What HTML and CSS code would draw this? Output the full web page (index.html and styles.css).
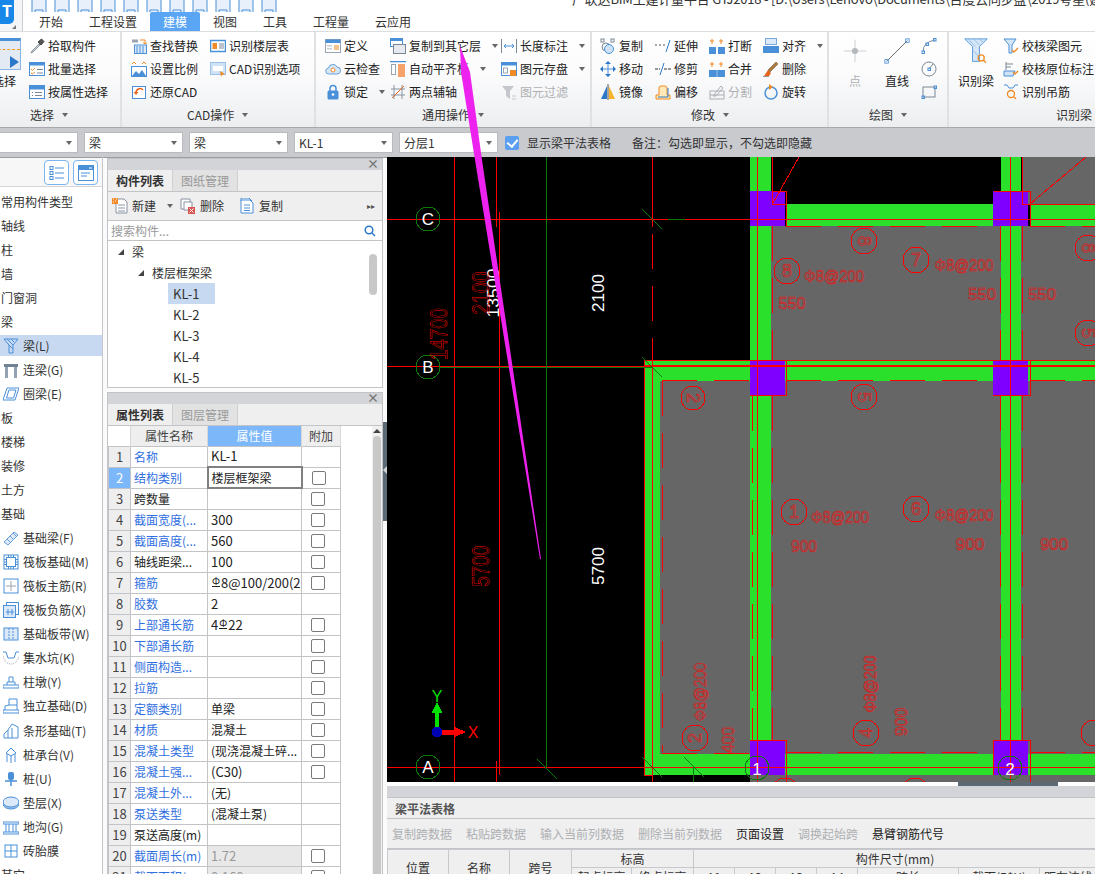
FILE: index.html
```html
<!DOCTYPE html>
<html lang="zh">
<head>
<meta charset="utf-8">
<title>GTJ2018</title>
<link rel="stylesheet" href="styles.css">
</head>
<body>
<svg class="defs" width="0" height="0">
<defs>
<symbol id="i-dropper" viewBox="0 0 16 16"><path d="M10 6 3 13l-1 2 2-1 7-7z" fill="#c9ced6" stroke="#8a94a3"/><path d="m9 4 3 3 3-3.500-2.500-2.500z" fill="#555" stroke="#444"/></symbol>
<symbol id="i-batch" viewBox="0 0 16 16"><rect x=".5" y="1.500" width="15" height="13" fill="#fff" stroke="#4a90d9"/><rect x=".5" y="1.500" width="15" height="3" fill="#4a90d9"/><path d="m2 8 1.500 1.500L6 7M2 12l1.500 1L6 11" stroke="#f08a24" fill="none"/><path d="M8 8.500h6M8 12h6" stroke="#7a8794"/></symbol>
<symbol id="i-attr" viewBox="0 0 16 16"><rect x=".5" y="1.500" width="15" height="13" fill="#fff" stroke="#4a90d9"/><rect x=".5" y="1.500" width="15" height="4" fill="#4a90d9"/><path d="M3 8.500h1M6 8.500h7M3 11.500h1M6 11.500h7" stroke="#7a8794"/></symbol>
<symbol id="i-find" viewBox="0 0 16 16"><path d="M1 1.500h6v3H1z" fill="#9aa5b1"/><path d="M9 2h5v4m-2-1.500L14 6l2-1.500" stroke="#f08a24" fill="none"/><rect x="3.500" y="7" width="12" height="8.500" fill="#dbe9f8" stroke="#4a90d9"/><path d="M6 8v7M9 8v7M12 8v7" stroke="#4a90d9"/></symbol>
<symbol id="i-scale" viewBox="0 0 16 16"><path d="m1 3 2-2 2 2M11 3l2-2 2 2" stroke="#f08a24" fill="none"/><rect x=".5" y="5.500" width="15" height="10" fill="#fff" stroke="#4a90d9"/><path d="m1 15 4-5 3 3 3-4 4 6z" fill="#4a90d9"/></symbol>
<symbol id="i-restore" viewBox="0 0 16 16"><rect x="1.500" y="2.500" width="13" height="12" fill="#fff" stroke="#4a90d9"/><path d="M5 9a4 4 0 0 1 7-3" stroke="#e8641b" stroke-width="1.500" fill="none"/><path d="m2.500 8 2.500 3 2.500-3z" fill="#e8641b"/></symbol>
<symbol id="i-floor" viewBox="0 0 16 16"><rect x=".5" y="2.500" width="15" height="11" fill="#fff" stroke="#4a90d9" stroke-width="1.500"/><rect x="2.500" y="5" width="4.500" height="6" fill="#f08a24"/><path d="M9 6h5M9 8h5M9 10h5" stroke="#7a8794"/></symbol>
<symbol id="i-cadopt" viewBox="0 0 16 16"><rect x=".5" y="1.500" width="15" height="12" fill="#cfe2f6" stroke="#9cc1e8"/><rect x="3" y="5" width="10" height="5" fill="#fff"/><path d="m10 10 5 3-3 1-1 2z" fill="#f08a24"/></symbol>
<symbol id="i-define" viewBox="0 0 16 16"><rect x=".5" y="1.500" width="15" height="13" fill="#fff" stroke="#9aa5b1"/><rect x=".5" y="1.500" width="15" height="3.500" fill="#4a90d9"/><rect x="2" y="7" width="5" height="1.500" fill="#c9ced6"/><rect x="2" y="10" width="5" height="1.500" fill="#c9ced6"/><rect x="9" y="7" width="5" height="5" fill="#f6c28b"/></symbol>
<symbol id="i-cloud" viewBox="0 0 16 16"><path d="M4 13a3 3 0 0 1-.5-6 4.500 4.500 0 0 1 8.500-1 3.500 3.500 0 0 1 0 7z" fill="#d5e6f7" stroke="#6a9fd8"/><circle cx="8" cy="9" r="2" fill="#fff" stroke="#f08a24"/></symbol>
<symbol id="i-lock" viewBox="0 0 16 16"><rect x="2.500" y="6.500" width="11" height="9" rx="1.500" fill="#4a90d9"/><path d="M5 7V4.500a3 3 0 0 1 6 0V7" stroke="#4a90d9" stroke-width="1.500" fill="none"/><circle cx="8" cy="10.500" r="1.300" fill="#fff"/></symbol>
<symbol id="i-copylayer" viewBox="0 0 16 16"><rect x=".5" y=".5" width="12" height="8" fill="#fff" stroke="#4a90d9"/><rect x=".5" y=".5" width="12" height="2.500" fill="#4a90d9"/><rect x="3.500" y="6.500" width="12" height="9" fill="#e6eaef" stroke="#7a8794"/></symbol>
<symbol id="i-align" viewBox="0 0 16 16"><path d="M0 .5h16" stroke="#4a90d9" stroke-width="1.500"/><rect x="1.500" y="3.500" width="4" height="10" fill="#fff" stroke="#9aa5b1"/><rect x="8" y="3" width="7" height="13" fill="#f6a26b"/></symbol>
<symbol id="i-twopt" viewBox="0 0 16 16" fill="none" stroke="#8a94a3"><path d="M4 1v14M12 1v14M1 5h14M1 11h14"/><path d="m2 14 12-12" stroke="#e8641b"/></symbol>
<symbol id="i-len" viewBox="0 0 16 16" fill="none" stroke="#4a90d9"><path d="M.5 1v14M15.500 1v14" stroke="#7a8794"/><path d="M3 8h10M5 6 3 8l2 2M11 6l2 2-2 2"/></symbol>
<symbol id="i-save" viewBox="0 0 16 16"><rect x=".5" y="1.500" width="15" height="13" fill="#fff" stroke="#4a90d9"/><rect x=".5" y="1.500" width="15" height="3" fill="#4a90d9"/><rect x="2.500" y="7" width="4" height="5" fill="#fff" stroke="#9aa5b1"/><rect x="9" y="9" width="6" height="6" fill="#f08a24"/></symbol>
<symbol id="i-filter" viewBox="0 0 16 16"><path d="M1 2h12L9 7v8L5 12V7z" fill="#c4c7cb"/><path d="M11 12h4M11 15h4" stroke="#c4c7cb"/></symbol>
<symbol id="i-copy" viewBox="0 0 16 16" fill="none"><rect x="1" y="1" width="3" height="3" stroke="#7a8794"/><rect x="11" y="1" width="3" height="3" stroke="#7a8794"/><circle cx="6" cy="9" r="4" stroke="#7a8794"/><circle cx="9" cy="11" r="4.500" fill="#cfe2f6" stroke="#4a90d9"/></symbol>
<symbol id="i-move" viewBox="0 0 16 16"><path d="M8 2v12M2 8h12" stroke="#4a90d9"/><path d="m8 0 3 3H5zM8 16l3-3H5zM0 8l3-3v6zM16 8l-3-3v6z" fill="#2b78c9"/></symbol>
<symbol id="i-mirror" viewBox="0 0 16 16"><path d="M7 2 1 15h6z" fill="#2b78c9"/><path d="M9 2l6 13H9z" fill="#f7b32b"/><path d="M8 0v16" stroke="#555"/></symbol>
<symbol id="i-extend" viewBox="0 0 16 16" fill="none"><path d="M0 7h2M4 7h2M8 7h2" stroke="#555" stroke-dasharray="2 1"/><path d="m15 2-4 12" stroke="#2b78c9"/></symbol>
<symbol id="i-trim" viewBox="0 0 16 16" fill="none"><path d="M0 8h5M9 8h7" stroke="#333" stroke-dasharray="3 1"/><path d="m9 2-4 12" stroke="#2b78c9"/></symbol>
<symbol id="i-offset" viewBox="0 0 16 16"><path d="M1 15v-4h3V4a2 2 0 0 1 2-2h4a2 2 0 0 1 2 2v7h3v4z" fill="#ffe9b8" stroke="#f08a24"/><path d="M3 13h10V4" fill="none" stroke="#2b78c9"/></symbol>
<symbol id="i-break" viewBox="0 0 16 16"><path d="M3 1v5M1 3h4M12 1v5M10 3h4" stroke="#f08a24"/><rect x="0" y="9" width="7" height="7" fill="#4a90d9"/><rect x="9" y="9" width="7" height="7" fill="#4a90d9"/></symbol>
<symbol id="i-merge" viewBox="0 0 16 16"><path d="M3 1v5M1 3h4M12 1v5M10 3h4" stroke="#f08a24"/><rect x="0" y="9" width="16" height="7" fill="#4a90d9"/><path d="M8 9v7" stroke="#9cc1e8"/></symbol>
<symbol id="i-split" viewBox="0 0 16 16" fill="none" stroke="#a8adb3"><rect x="1" y="7" width="14" height="8"/><path d="m4 12 8-10 2 2-7 8zM1 11h14"/></symbol>
<symbol id="i-alignr" viewBox="0 0 16 16"><rect x="2.500" y=".5" width="11" height="6" fill="#dbe9f8" stroke="#7aa9dc"/><rect y="8" width="16" height="7" fill="#4a90d9"/></symbol>
<symbol id="i-del" viewBox="0 0 16 16"><path d="m5 9 8-8 2 2-8 8z" fill="#a9793f" stroke="#6b4a22" stroke-width=".5"/><path d="m1 15 4-6 3 3-2 3z" fill="#e8641b"/><path d="M0 16h6" stroke="#333"/></symbol>
<symbol id="i-rotate" viewBox="0 0 16 16" fill="none"><circle cx="8" cy="9" r="6" stroke="#4a90d9" stroke-width="1.500"/><path d="M6 0v6l4-3z" fill="#f08a24"/></symbol>
<symbol id="i-arc" viewBox="0 0 16 16" fill="none" stroke="#7a8794"><path d="M2 14Q2 4 14 2"/><rect x="1" y="13" width="2.500" height="2.500" stroke="#4a90d9"/><rect x="5" y="5" width="2.500" height="2.500" stroke="#4a90d9"/><rect x="12.500" y=".5" width="2.500" height="2.500" stroke="#4a90d9"/></symbol>
<symbol id="i-circle" viewBox="0 0 16 16" fill="none" stroke="#7a8794"><circle cx="8" cy="8" r="7"/><path d="m8 8 4-5"/><rect x="7" y="7" width="2.500" height="2.500" stroke="#4a90d9"/></symbol>
<symbol id="i-rect" viewBox="0 0 16 16" fill="none" stroke="#7a8794"><rect x="2" y="3" width="12" height="10"/><rect x="1" y="12" width="2.500" height="2.500" stroke="#4a90d9"/><rect x="13" y="2" width="2.500" height="2.500" stroke="#4a90d9"/></symbol>
<symbol id="i-verify" viewBox="0 0 16 16"><path d="M1 1h12L9 7v8H6V7z" fill="#d5e6f7" stroke="#4a90d9"/><path d="m9 12 2 2 4-4" stroke="#f08a24" fill="none" stroke-width="1.300"/></symbol>
<symbol id="i-verify2" viewBox="0 0 16 16"><path d="M3 1v8M3 3h7M3 6h5" stroke="#7a8794" fill="none"/><path d="M1 10h11l-2 5H1z" fill="#cfe2f6" stroke="#4a90d9"/><path d="m10 11 2 2 3-3" stroke="#f08a24" fill="none" stroke-width="1.300"/></symbol>
<symbol id="i-hang" viewBox="0 0 16 16" fill="none"><path d="M1 1h3l2 3h4l2-3h3" stroke="#4a90d9"/><circle cx="8" cy="10" r="3.500" stroke="#f08a24" stroke-width="1.300"/><path d="m10.500 12.500 2.500 2.500" stroke="#f08a24" stroke-width="1.300"/></symbol>
<symbol id="i-beam" viewBox="0 0 16 16" fill="none" stroke="#4a90d9"><path d="M1 1h14l-5 6v8H6V7z"/><path d="m4 1 6 6M8 1l3 3M6 7l4 4"/></symbol>
<symbol id="i-link" viewBox="0 0 16 16"><path d="M1 2h14v3H1z" fill="#6f8296"/><path d="M2 5h3v11H2zM11 5h3v11h-3z" fill="#93a3b3"/></symbol>
<symbol id="i-ring" viewBox="0 0 16 16" fill="none" stroke="#4a90d9"><path d="M4 2h12l-4 12H0zM6 4h7l-2.500 8H3.500z"/></symbol>
<symbol id="i-fbeam" viewBox="0 0 16 16"><path d="m1 12 10-10 4 3L5 15z" fill="#dbe9f8" stroke="#6a9fd8"/><path d="m4 9 3 3M7 6l3 3M10 3l3 3" stroke="#6a9fd8"/></symbol>
<symbol id="i-raft" viewBox="0 0 16 16" fill="none" stroke="#4a90d9"><rect x="1" y="1" width="14" height="14"/><rect x="3.500" y="3.500" width="9" height="9"/><path d="M1 5.500h2.500M1 8h2.500M1 10.500h2.500M12.500 5.500H15M12.500 8H15M12.500 10.500H15M5.500 1v2.500M8 1v2.500M10.500 1v2.500M5.500 12.500V15M8 12.500V15M10.500 12.500V15"/></symbol>
<symbol id="i-rmain" viewBox="0 0 16 16" fill="none"><rect x="1" y="1" width="14" height="14" stroke="#4a90d9"/><path d="M8 3v10M3 8h10" stroke="#9aa5b1"/></symbol>
<symbol id="i-rneg" viewBox="0 0 16 16" fill="none" stroke="#4a90d9"><rect x="3.500" y=".5" width="12" height="12"/><rect x=".5" y="3.500" width="12" height="12" fill="#dbe9f8"/><path d="M5 7v6M9 7v6M3 10h8"/></symbol>
<symbol id="i-band" viewBox="0 0 16 16" fill="none" stroke="#4a90d9"><rect x="1" y="2" width="14" height="12" fill="#dbe9f8"/><path d="M6 2v12M10 2v12" stroke-dasharray="2 1"/></symbol>
<symbol id="i-pit" viewBox="0 0 16 16" fill="none" stroke="#4a90d9"><path d="M0 2h3l2 6h6l2-6h3"/><path d="M0 6q2 8 8 8t8-8" stroke="#9aa5b1" stroke-dasharray="1 1"/></symbol>
<symbol id="i-pier" viewBox="0 0 16 16" fill="none" stroke="#4a90d9"><rect x="0" y="11" width="16" height="3"/><path d="M4 11V8h8v3M6 8V3h4v5"/></symbol>
<symbol id="i-iso" viewBox="0 0 16 16" fill="none" stroke="#4a90d9"><path d="M0 15v-3h16v3zM2 12V8l4-1V1h8v11"/><path d="M6 7h8"/></symbol>
<symbol id="i-strip" viewBox="0 0 16 16" fill="none" stroke="#4a90d9"><path d="M1 15v-4l4-4 4-6 6 3v11zM5 7v8M9 5v10"/></symbol>
<symbol id="i-cap" viewBox="0 0 16 16" fill="none" stroke="#4a90d9"><path d="m8 1 5 5-5 3-5-3zM4 7v8M8 9v7M12 7v8"/></symbol>
<symbol id="i-pile" viewBox="0 0 16 16"><rect x="5" y="1" width="6" height="8" rx="2" fill="#4a90d9"/><path d="M2 10h12M8 9v6" stroke="#4a90d9" stroke-width="1.500"/></symbol>
<symbol id="i-cushion" viewBox="0 0 16 16"><ellipse cx="8" cy="9" rx="8" ry="5" fill="#9fc3e8" stroke="#4a90d9"/><ellipse cx="8" cy="7" rx="8" ry="5" fill="#dbe9f8" stroke="#4a90d9"/></symbol>
<symbol id="i-trench" viewBox="0 0 16 16" fill="none" stroke="#4a90d9"><path d="M0 3h16v2H0zM3 5v8M13 5v8M0 13h16v2H0zM6 5v8M10 5v8"/></symbol>
<symbol id="i-brick" viewBox="0 0 16 16" fill="none" stroke="#4a90d9"><rect x="2" y="2" width="12" height="12"/><path d="M8 2v12M2 8h12"/></symbol>
<symbol id="i-list" viewBox="0 0 16 16" fill="none" stroke="#4a90d9"><rect x="1" y="1.500" width="3" height="3"/><rect x="1" y="6.500" width="3" height="3"/><rect x="1" y="11.500" width="3" height="3"/><path d="M6 3h9M6 8h9M6 13h9"/></symbol>
<symbol id="i-win" viewBox="0 0 16 16"><rect x=".5" y=".5" width="15" height="15" fill="#fff" stroke="#4a90d9"/><rect x="1" y="1" width="14" height="4" fill="#4a90d9"/><path d="M3 8h9M3 11h6" stroke="#4a90d9"/><path d="M11 3h3" stroke="#fff"/></symbol>
<symbol id="i-new" viewBox="0 0 16 16"><path d="M4 1h8l3 3v11H4z" fill="#fff" stroke="#8a94a3"/><path d="M6 7h7M6 10h7M6 13h7" stroke="#8a94a3"/><rect x="0" y="0" width="6" height="6" fill="#f08a24"/><path d="M1 1h1M3 3h1M1 4h1M4 1h1" stroke="#fff"/></symbol>
<symbol id="i-remove" viewBox="0 0 16 16"><path d="M1 1h9v10H1z" fill="#fff" stroke="#8a94a3"/><path d="M4 4h8v8H4z" fill="#fff" stroke="#8a94a3"/><rect x="8" y="9" width="7" height="7" fill="#d9534f"/><path d="m9.500 10.500 4 4m0-4-4 4" stroke="#fff"/></symbol>
<symbol id="i-dup" viewBox="0 0 16 16" fill="none" stroke="#4a90d9"><path d="M2 3V0h8l3 3"/><path d="M2 2h9l3 3v10H2z" fill="#fff"/><path d="M5 7h6M5 10h6M5 12.500h6"/></symbol>
<symbol id="i-search" viewBox="0 0 12 12" fill="none" stroke="#2b78c9" stroke-width="1.500"><circle cx="5" cy="5" r="3.800"/><path d="m8 8 3 3"/></symbol>
<symbol id="i-qa" viewBox="0 0 16 16" fill="none" stroke="#4a90d9"><rect x="1" y="-6" width="14" height="21" fill="#e8f1fb"/><path d="M4 15v-5h8v5"/></symbol>
</defs>
</svg>

<div class="app">
  <header class="head">
    <div class="logo-cell"><div class="logo">T</div><i class="logo-tri"></i></div>
    <div class="head-main">
      <div class="titlebar">
        <div class="qa">
          <svg class="qa-ic"><use href="#i-qa"/></svg>
          <svg class="qa-ic"><use href="#i-qa"/></svg>
          <svg class="qa-ic"><use href="#i-qa"/></svg>
          <svg class="qa-ic"><use href="#i-qa"/></svg>
          <svg class="qa-ic"><use href="#i-qa"/></svg>
          <svg class="qa-ic"><use href="#i-qa"/></svg>
          <svg class="qa-ic"><use href="#i-qa"/></svg>
          <svg class="qa-ic"><use href="#i-qa"/></svg>
          <svg class="qa-ic"><use href="#i-qa"/></svg>
          <svg class="qa-ic"><use href="#i-qa"/></svg>
          <svg class="qa-ic"><use href="#i-qa"/></svg>
        </div>
        <div class="title-text">广联达BIM土建计量平台 GTJ2018 - [D:\Users\Lenovo\Documents\百度云同步盘\2019夸星(建筑)\</div>
      </div>
      <nav class="tabs">
        <span class="tab">开始</span><span class="tab">工程设置</span><span class="tab tab-on">建模</span><span class="tab">视图</span><span class="tab">工具</span><span class="tab">工程量</span><span class="tab">云应用</span>
      </nav>
    </div>
  </header>

  <section class="ribbon">
    <div class="group g1">
      <div class="g-body">
        <div class="big big-sel">
          <div class="sel-ic"><i class="sel-dash"></i><i class="sel-tri"></i></div>
          <span>选择</span>
        </div>
        <div class="col">
          <div class="tool"><svg class="ic"><use href="#i-dropper"/></svg><span>拾取构件</span></div>
          <div class="tool"><svg class="ic"><use href="#i-batch"/></svg><span>批量选择</span></div>
          <div class="tool"><svg class="ic"><use href="#i-attr"/></svg><span>按属性选择</span></div>
        </div>
      </div>
      <div class="g-label"><span>选择</span><i class="caret"></i></div>
    </div>
    <div class="group g2">
      <div class="g-body">
        <div class="col w79">
          <div class="tool"><svg class="ic"><use href="#i-find"/></svg><span>查找替换</span></div>
          <div class="tool"><svg class="ic"><use href="#i-scale"/></svg><span>设置比例</span></div>
          <div class="tool"><svg class="ic"><use href="#i-restore"/></svg><span>还原CAD</span></div>
        </div>
        <div class="col">
          <div class="tool"><svg class="ic"><use href="#i-floor"/></svg><span>识别楼层表</span></div>
          <div class="tool"><svg class="ic"><use href="#i-cadopt"/></svg><span>CAD识别选项</span></div>
        </div>
      </div>
      <div class="g-label"><span>CAD操作</span><i class="caret"></i></div>
    </div>
    <div class="group g3">
      <div class="g-body">
        <div class="col w65">
          <div class="tool"><svg class="ic"><use href="#i-define"/></svg><span>定义</span></div>
          <div class="tool"><svg class="ic"><use href="#i-cloud"/></svg><span>云检查</span></div>
          <div class="tool"><svg class="ic"><use href="#i-lock"/></svg><span>锁定</span><i class="caret"></i></div>
        </div>
        <div class="col w111">
          <div class="tool"><svg class="ic"><use href="#i-copylayer"/></svg><span>复制到其它层</span><i class="caret"></i></div>
          <div class="tool"><svg class="ic"><use href="#i-align"/></svg><span>自动平齐板</span><i class="caret"></i></div>
          <div class="tool"><svg class="ic"><use href="#i-twopt"/></svg><span>两点辅轴</span></div>
        </div>
        <div class="col">
          <div class="tool"><svg class="ic"><use href="#i-len"/></svg><span>长度标注</span><i class="caret"></i></div>
          <div class="tool"><svg class="ic"><use href="#i-save"/></svg><span>图元存盘</span><i class="caret"></i></div>
          <div class="tool off"><svg class="ic"><use href="#i-filter"/></svg><span>图元过滤</span></div>
        </div>
      </div>
      <div class="g-label"><span>通用操作</span><i class="caret"></i></div>
    </div>
    <div class="group g4">
      <div class="g-body">
        <div class="col w55">
          <div class="tool"><svg class="ic"><use href="#i-copy"/></svg><span>复制</span></div>
          <div class="tool"><svg class="ic"><use href="#i-move"/></svg><span>移动</span></div>
          <div class="tool"><svg class="ic"><use href="#i-mirror"/></svg><span>镜像</span></div>
        </div>
        <div class="col w54">
          <div class="tool"><svg class="ic"><use href="#i-extend"/></svg><span>延伸</span></div>
          <div class="tool"><svg class="ic"><use href="#i-trim"/></svg><span>修剪</span></div>
          <div class="tool"><svg class="ic"><use href="#i-offset"/></svg><span>偏移</span></div>
        </div>
        <div class="col w54">
          <div class="tool"><svg class="ic"><use href="#i-break"/></svg><span>打断</span></div>
          <div class="tool"><svg class="ic"><use href="#i-merge"/></svg><span>合并</span></div>
          <div class="tool off"><svg class="ic"><use href="#i-split"/></svg><span>分割</span></div>
        </div>
        <div class="col">
          <div class="tool"><svg class="ic"><use href="#i-alignr"/></svg><span>对齐</span><i class="caret"></i></div>
          <div class="tool"><svg class="ic"><use href="#i-del"/></svg><span>删除</span></div>
          <div class="tool"><svg class="ic"><use href="#i-rotate"/></svg><span>旋转</span></div>
        </div>
      </div>
      <div class="g-label"><span>修改</span><i class="caret"></i></div>
    </div>
    <div class="group g5">
      <div class="g-body">
        <div class="big big-pt off">
          <svg class="big-ic" viewBox="0 0 30 30"><path d="M15 2v26M2 15h26" stroke="#c4c7cb"/><circle cx="15" cy="15" r="3.500" fill="#b4b7bb"/></svg>
          <span>点</span>
        </div>
        <div class="big big-line">
          <svg class="big-ic" viewBox="0 0 30 30" fill="none"><path d="M3 27 27 3" stroke="#555"/><rect x="1" y="25" width="4" height="4" stroke="#4a90d9"/><rect x="25" y="1" width="4" height="4" stroke="#4a90d9"/></svg>
          <span>直线</span>
        </div>
        <div class="col">
          <div class="tool"><svg class="ic"><use href="#i-arc"/></svg></div>
          <div class="tool"><svg class="ic"><use href="#i-circle"/></svg></div>
          <div class="tool"><svg class="ic"><use href="#i-rect"/></svg></div>
        </div>
      </div>
      <div class="g-label"><span>绘图</span><i class="caret"></i></div>
    </div>
    <div class="group g6">
      <div class="g-body">
        <div class="big big-beam">
          <svg class="big-ic" viewBox="0 0 30 30" fill="none"><path d="M2 1h26l-9 9v17h-8V10z" fill="#d5e6f7" stroke="#4a90d9"/><path d="m6 1 8 9M12 1l8 8M18 1l6 4M11 14l8 8" stroke="#8fb8e4"/><circle cx="21" cy="23" r="3.500" stroke="#f08a24" stroke-width="1.500"/><path d="m24 26 2.500 2.500" stroke="#f08a24" stroke-width="1.500"/></svg>
          <span>识别梁</span>
        </div>
        <div class="col">
          <div class="tool"><svg class="ic"><use href="#i-verify"/></svg><span>校核梁图元</span></div>
          <div class="tool"><svg class="ic"><use href="#i-verify2"/></svg><span>校核原位标注</span></div>
          <div class="tool"><svg class="ic"><use href="#i-hang"/></svg><span>识别吊筋</span></div>
        </div>
      </div>
      <div class="g-label"><span>识别梁</span></div>
    </div>
  </section>

  <section class="combos">
    <div class="combo combo-first"><span>层</span><i class="caret"></i></div>
    <div class="combo"><span>梁</span><i class="caret"></i></div>
    <div class="combo"><span>梁</span><i class="caret"></i></div>
    <div class="combo"><span>KL-1</span><i class="caret"></i></div>
    <div class="combo"><span>分层1</span><i class="caret"></i></div>
    <label class="show-check"><i class="check-on"></i><span>显示梁平法表格</span></label>
    <span class="note">备注：勾选即显示，不勾选即隐藏</span>
  </section>

  <main class="main">
    <aside class="nav">
      <div class="nav-head">
        <span class="nav-btn"><svg class="ic"><use href="#i-list"/></svg></span>
        <span class="nav-btn"><svg class="ic"><use href="#i-win"/></svg></span>
      </div>
      <ul class="nav-list">
        <li class="cat">常用构件类型</li>
        <li class="cat">轴线</li>
        <li class="cat">柱</li>
        <li class="cat">墙</li>
        <li class="cat">门窗洞</li>
        <li class="cat">梁</li>
        <li class="sub sub-on"><svg class="ic"><use href="#i-beam"/></svg><span>梁(L)</span></li>
        <li class="sub"><svg class="ic"><use href="#i-link"/></svg><span>连梁(G)</span></li>
        <li class="sub"><svg class="ic"><use href="#i-ring"/></svg><span>圈梁(E)</span></li>
        <li class="cat">板</li>
        <li class="cat">楼梯</li>
        <li class="cat">装修</li>
        <li class="cat">土方</li>
        <li class="cat">基础</li>
        <li class="sub"><svg class="ic"><use href="#i-fbeam"/></svg><span>基础梁(F)</span></li>
        <li class="sub"><svg class="ic"><use href="#i-raft"/></svg><span>筏板基础(M)</span></li>
        <li class="sub"><svg class="ic"><use href="#i-rmain"/></svg><span>筏板主筋(R)</span></li>
        <li class="sub"><svg class="ic"><use href="#i-rneg"/></svg><span>筏板负筋(X)</span></li>
        <li class="sub"><svg class="ic"><use href="#i-band"/></svg><span>基础板带(W)</span></li>
        <li class="sub"><svg class="ic"><use href="#i-pit"/></svg><span>集水坑(K)</span></li>
        <li class="sub"><svg class="ic"><use href="#i-pier"/></svg><span>柱墩(Y)</span></li>
        <li class="sub"><svg class="ic"><use href="#i-iso"/></svg><span>独立基础(D)</span></li>
        <li class="sub"><svg class="ic"><use href="#i-strip"/></svg><span>条形基础(T)</span></li>
        <li class="sub"><svg class="ic"><use href="#i-cap"/></svg><span>桩承台(V)</span></li>
        <li class="sub"><svg class="ic"><use href="#i-pile"/></svg><span>桩(U)</span></li>
        <li class="sub"><svg class="ic"><use href="#i-cushion"/></svg><span>垫层(X)</span></li>
        <li class="sub"><svg class="ic"><use href="#i-trench"/></svg><span>地沟(G)</span></li>
        <li class="sub"><svg class="ic"><use href="#i-brick"/></svg><span>砖胎膜</span></li>
        <li class="cat">其它</li>
      </ul>
    </aside>

    <div class="mid">
      <section class="panel panel-comp">
        <div class="p-title"><span class="p-x">×</span></div>
        <div class="p-tabs"><span class="p-tab p-tab-on">构件列表</span><span class="p-tab">图纸管理</span></div>
        <div class="p-tools">
          <div class="p-tool p-new"><svg class="ic"><use href="#i-new"/></svg><span>新建</span><i class="caret"></i></div>
          <div class="p-tool p-rem"><svg class="ic"><use href="#i-remove"/></svg><span>删除</span></div>
          <div class="p-tool"><svg class="ic"><use href="#i-dup"/></svg><span>复制</span></div>
          <span class="p-more">▸▸</span>
        </div>
        <div class="p-search"><span>搜索构件...</span><svg class="search-ic"><use href="#i-search"/></svg></div>
        <div class="tree">
          <div class="tree-row lv1"><i class="tri"></i><span>梁</span></div>
          <div class="tree-row lv2"><i class="tri"></i><span>楼层框架梁</span></div>
          <div class="tree-row lv3"><span class="leaf leaf-on">KL-1</span></div>
          <div class="tree-row lv3"><span class="leaf">KL-2</span></div>
          <div class="tree-row lv3"><span class="leaf">KL-3</span></div>
          <div class="tree-row lv3"><span class="leaf">KL-4</span></div>
          <div class="tree-row lv3"><span class="leaf">KL-5</span></div>
          <i class="tree-thumb"></i>
        </div>
      </section>

      <section class="panel panel-prop">
        <div class="p-title"><span class="p-x">×</span></div>
        <div class="p-tabs"><span class="p-tab p-tab-on">属性列表</span><span class="p-tab">图层管理</span></div>
        <div class="prop-body">
          <table class="prop">
            <colgroup><col class="c-n"><col class="c-name"><col class="c-val"><col class="c-add"></colgroup>
            <thead><tr><th class="blank"></th><th>属性名称</th><th class="th-on">属性值</th><th>附加</th></tr></thead>
            <tbody>
              <tr><td class="n">1</td><td class="link">名称</td><td class="v">KL-1</td><td></td></tr>
              <tr><td class="n n-on">2</td><td class="link">结构类别</td><td class="v v-sel">楼层框架梁</td><td><i class="cb"></i></td></tr>
              <tr><td class="n">3</td><td>跨数量</td><td class="v"></td><td><i class="cb"></i></td></tr>
              <tr><td class="n">4</td><td class="link">截面宽度(...</td><td class="v">300</td><td><i class="cb"></i></td></tr>
              <tr><td class="n">5</td><td class="link">截面高度(...</td><td class="v">560</td><td><i class="cb"></i></td></tr>
              <tr><td class="n">6</td><td>轴线距梁...</td><td class="v">100</td><td><i class="cb"></i></td></tr>
              <tr><td class="n">7</td><td class="link">箍筋</td><td class="v"><span class="rebar">Φ</span>8@100/200(2)</td><td><i class="cb"></i></td></tr>
              <tr><td class="n">8</td><td class="link">胶数</td><td class="v">2</td><td></td></tr>
              <tr><td class="n">9</td><td class="link">上部通长筋</td><td class="v">4<span class="rebar">Φ</span>22</td><td><i class="cb"></i></td></tr>
              <tr><td class="n">10</td><td class="link">下部通长筋</td><td class="v"></td><td><i class="cb"></i></td></tr>
              <tr><td class="n">11</td><td class="link">侧面构造...</td><td class="v"></td><td><i class="cb"></i></td></tr>
              <tr><td class="n">12</td><td class="link">拉筋</td><td class="v"></td><td><i class="cb"></i></td></tr>
              <tr><td class="n">13</td><td class="link">定额类别</td><td class="v v-c">单梁</td><td><i class="cb"></i></td></tr>
              <tr><td class="n">14</td><td class="link">材质</td><td class="v v-c">混凝土</td><td><i class="cb"></i></td></tr>
              <tr><td class="n">15</td><td class="link">混凝土类型</td><td class="v v-c">(现浇混凝土碎...</td><td><i class="cb"></i></td></tr>
              <tr><td class="n">16</td><td class="link">混凝土强...</td><td class="v">(C30)</td><td><i class="cb"></i></td></tr>
              <tr><td class="n">17</td><td class="link">混凝土外...</td><td class="v v-c">(无)</td><td></td></tr>
              <tr><td class="n">18</td><td class="link">泵送类型</td><td class="v v-c">(混凝土泵)</td><td></td></tr>
              <tr><td class="n">19</td><td>泵送高度(m)</td><td class="v"></td><td></td></tr>
              <tr><td class="n">20</td><td class="link">截面周长(m)</td><td class="v v-gray">1.72</td><td><i class="cb"></i></td></tr>
              <tr><td class="n">21</td><td class="link">截面面积(...</td><td class="v v-gray">0.168</td><td><i class="cb"></i></td></tr>
            </tbody>
          </table>
          <div class="vscroll"><i class="v-up"></i><i class="v-thumb"></i></div>
        </div>
      </section>
    </div>

    <div class="splitter"><div class="grip"><i></i></div></div>

    <div class="work">
      <svg class="cad" width="708" height="625" viewBox="387 157 708 625">
        <rect x="387" y="157" width="708" height="625" fill="#000"/>
        <g fill="#666">
          <rect x="771" y="226" width="324" height="135"/>
          <rect x="660" y="377" width="435" height="378"/>
          <rect x="1022" y="157" width="73" height="47"/>
          <rect x="750" y="775" width="345" height="7"/>
        </g>
        <g fill="#2be02b">
          <rect x="750" y="157" width="21" height="583"/>
          <rect x="1001" y="157" width="20" height="583"/>
          <rect x="786" y="204" width="207" height="22"/>
          <rect x="1030" y="204" width="65" height="22"/>
          <rect x="644" y="361" width="16" height="414"/>
          <rect x="644" y="361" width="451" height="20"/>
          <rect x="652" y="754" width="443" height="21"/>
        </g>
        <g fill="#8000ff">
          <rect x="750" y="191" width="35" height="35"/>
          <rect x="993" y="191" width="35" height="35"/>
          <rect x="750" y="360" width="35" height="35"/>
          <rect x="993" y="360" width="35" height="35"/>
          <rect x="750" y="740" width="35" height="35"/>
          <rect x="993" y="740" width="35" height="35"/>
        </g>
        <g class="r">
          <path d="M454.500 157V782M499.500 212V775M496.500 157V227M496.500 761V782M652.500 157V227M652.500 360V782"/>
          <path d="M387 219.500H1095M387 366.500H644M387 767.500H1095M644.500 360.500H1095M644.500 360V775.500H652M757.500 157V782M1010.500 157V782"/>
          <path class="thick" d="M644 366H1095"/>
          <path d="M772.500 157V204.500H786.500M772.500 191.500H786.500V226M799 157 772.500 204M993.500 191.500H1030.500V226M1022.500 157V204.500H1095M1030 204 1086 157"/>
          <path d="M750 395.500H786.500V360M993 395.500H1030.500V360M750 740.500H786.500V782M993 740.500H1030.500V782M993.500 740.500V775"/>
        </g>
        <g class="r dash">
          <path d="M652.500 234V360M662.500 381V752M772.500 226V360M772.500 396V740M1000.500 226V360M1000.500 396V740M1022.500 226V360M1022.500 396V740M752.500 396V740"/>
          <path d="M786 226.500H993M1030 226.500H1095M662 380.500H750M786 380.500H993M1030 380.500H1095M786 752.500H993M1030 752.500H1095M662 753.500H750"/>
        </g>
        <g class="g">
          <path d="M546.500 157V767M440 367.500H652M668 219.500H685M642 209 662 229M642 357 662 377M537 759 557 779M642 757 662 777M684 757 704 777M693.500 767V782"/>
          <circle cx="428" cy="219" r="12"/><circle cx="428" cy="367" r="12"/><circle cx="428" cy="767" r="12"/>
          <circle cx="757" cy="768" r="12"/><circle cx="1010" cy="768" r="12"/>
        </g>
        <g class="wt">
          <text x="428" y="219">C</text><text x="428" y="367">B</text><text x="428" y="767">A</text>
          <text x="757" y="769">1</text><text x="1010" y="769">2</text>
          <text transform="rotate(-90 493 293)" x="493" y="293" textLength="49" lengthAdjust="spacingAndGlyphs">13500</text>
          <text transform="rotate(-90 598 293)" x="598" y="293" textLength="38" lengthAdjust="spacingAndGlyphs">2100</text>
          <text transform="rotate(-90 598 566)" x="598" y="566" textLength="38" lengthAdjust="spacingAndGlyphs">5700</text>
        </g>
        <g class="rt">
          <text class="big-t" transform="rotate(-90 480 293)" x="480" y="293" textLength="43" lengthAdjust="spacingAndGlyphs">2100</text>
          <text class="big-t" transform="rotate(-90 438 334)" x="438" y="334" textLength="52" lengthAdjust="spacingAndGlyphs">14700</text>
          <text class="big-t" transform="rotate(-90 480 566)" x="480" y="566" textLength="41" lengthAdjust="spacingAndGlyphs">5700</text>
          <text x="834" y="276" textLength="60" lengthAdjust="spacingAndGlyphs">Φ8@200</text>
          <text x="792" y="303" textLength="27" lengthAdjust="spacingAndGlyphs">550</text>
          <text x="964" y="265" textLength="59" lengthAdjust="spacingAndGlyphs">Φ8@200</text>
          <text x="982" y="294" textLength="28" lengthAdjust="spacingAndGlyphs">550</text>
          <text x="1042" y="294" textLength="28" lengthAdjust="spacingAndGlyphs">550</text>
          <text x="840" y="517" textLength="58" lengthAdjust="spacingAndGlyphs">Φ8@200</text>
          <text x="804" y="546" textLength="26" lengthAdjust="spacingAndGlyphs">900</text>
          <text x="964" y="515" textLength="59" lengthAdjust="spacingAndGlyphs">Φ8@200</text>
          <text x="970" y="544" textLength="29" lengthAdjust="spacingAndGlyphs">900</text>
          <text x="1054" y="544" textLength="28" lengthAdjust="spacingAndGlyphs">900</text>
          <text transform="rotate(-90 870 684)" x="870" y="684" textLength="57" lengthAdjust="spacingAndGlyphs">Φ8@200</text>
          <text transform="rotate(-90 901 722)" x="901" y="722" textLength="28" lengthAdjust="spacingAndGlyphs">900</text>
          <text transform="rotate(-90 700 692)" x="700" y="692" textLength="58" lengthAdjust="spacingAndGlyphs">Φ8@200</text>
          <text transform="rotate(-90 728 740)" x="728" y="740" textLength="27" lengthAdjust="spacingAndGlyphs">400</text>
          <g class="num">
            <text x="787" y="271">8</text>
            <text transform="rotate(90 864 241)" x="864" y="241">8</text>
            <text x="916" y="260">7</text>
            <text transform="rotate(90 864 397)" x="864" y="397">5</text>
            <text transform="rotate(90 693 398)" x="693" y="398">2</text>
            <text x="794" y="512">1</text>
            <text x="916" y="509">6</text>
            <text transform="rotate(-90 866 733)" x="866" y="733">4</text>
            <text transform="rotate(-90 695 738)" x="695" y="738">2</text>
            <text transform="rotate(90 1088 248)" x="1088" y="248">8</text>
            <text transform="rotate(90 1088 333)" x="1088" y="333">5</text>
          </g>
        </g>
        <g class="r">
          <circle cx="787" cy="271" r="13"/><circle cx="864" cy="241" r="13"/><circle cx="916" cy="260" r="13"/>
          <circle cx="864" cy="397" r="13"/><circle cx="693" cy="398" r="12"/><circle cx="794" cy="512" r="13"/>
          <circle cx="916" cy="509" r="13"/><circle cx="866" cy="733" r="13"/><circle cx="695" cy="738" r="13"/>
          <circle cx="1088" cy="248" r="13"/><circle cx="1088" cy="333" r="13"/><circle cx="1094" cy="733" r="13"/>
          <circle cx="785" cy="791" r="13"/><circle cx="915" cy="791" r="13"/>
        </g>
        <path d="M437 732V712" stroke="#00e000" stroke-width="4"/>
        <path d="m437 702 5.500 11h-11z" fill="#00e000"/>
        <path d="M437 732H456" stroke="#f00" stroke-width="5"/>
        <path d="m466 732-11-5v10z" fill="#f00"/>
        <circle cx="437" cy="732" r="5.500" fill="#0000b4"/>
        <text class="ax ax-y" x="437" y="696">Y</text>
        <text class="ax ax-x" x="473" y="732">X</text>
      </svg>
      <div class="hbar"><i></i></div>
      <section class="plan">
        <div class="p-title"></div>
        <div class="plan-tab"><span>梁平法表格</span></div>
        <div class="plan-tools">
          <span class="off">复制跨数据</span><span class="off">粘贴跨数据</span><span class="off">输入当前列数据</span><span class="off">删除当前列数据</span><span>页面设置</span><span class="off">调换起始跨</span><span>悬臂钢筋代号</span>
        </div>
        <table class="plan-table">
          <colgroup><col class="w61"><col class="w61"><col class="w62"><col class="w60"><col class="w62"><col class="w41"><col class="w41"><col class="w41"><col class="w41"><col class="w101"><col class="w81"><col class="w57"></colgroup>
          <tr><th rowspan="2">位置</th><th rowspan="2">名称</th><th rowspan="2">跨号</th><th colspan="2">标高</th><th colspan="7">构件尺寸(mm)</th></tr>
          <tr><th>起点标高</th><th>终点标高</th><th>A1</th><th>A2</th><th>A3</th><th>A4</th><th>跨长</th><th>截面(B*H)</th><th>距左边线</th></tr>
        </table>
      </section>
    </div>
  </main>
</div>

<svg class="pointer-arrow" width="1095" height="874" viewBox="0 0 1095 874">
  <polygon points="460,46 470,72 482,160 541,559 540,559 475,160 461,72" fill="#ee22ee"/>
</svg>
</body>
</html>
```

FILE: styles.css
```css
* { box-sizing: border-box; }
html, body { margin: 0; padding: 0; }
body {
  width: 1095px;
  height: 874px;
  overflow: hidden;
  position: relative;
  background: #fff;
  color: #222;
  font: 12px/16px "Noto Sans CJK SC", "Liberation Sans", sans-serif;
}
i { display: block; font-style: normal; }
ul { list-style: none; margin: 0; padding: 0; }
.defs { position: absolute; }
.app { width: 1095px; height: 874px; overflow: hidden; }
.ic { width: 16px; height: 16px; flex: none; }

/* header */
.head { display: flex; height: 32px; border-bottom: 1px solid #dcdde0; }
.logo-cell { width: 23px; height: 31px; background: #f4f5f6; border-right: 1px solid #c9cbcf; overflow: hidden; position: relative; }
.logo { width: 14px; height: 24px; border-radius: 0 0 5px 0; background: #1787e8; color: #fff; font-weight: 700; font-size: 16px; line-height: 20px; text-align: right; padding-right: 2px; }
.logo-tri { position: absolute; right: 6px; bottom: 2px; border-left: 4px solid transparent; border-bottom: 4px solid #777; }
.head-main { flex: 1; min-width: 0; }
.titlebar { display: flex; height: 12px; overflow: hidden; position: relative; }
.qa { display: flex; gap: 7px; padding-left: 8px; height: 16px; }
.qa-ic { width: 16px; height: 16px; }
.title-text { position: absolute; left: 549px; top: -9px; white-space: nowrap; color: #333; font-size: 13px; line-height: 16px; letter-spacing: -.2px; }
.tabs { display: flex; height: 19px; padding-left: 3px; }
.tab { padding: 0 13px; line-height: 19px; color: #333; }
.tab-on { background: #5aa6f4; color: #fff; border-radius: 2px 2px 0 0; }

/* ribbon */
.ribbon { display: flex; height: 96px; background: linear-gradient(#fff, #fbfbfc 45%, #eceef0); border-bottom: 1px solid #a6a8ac; }
.group { display: flex; flex-direction: column; flex: none; border-right: 2px solid #dfe1e3; }
.g1 { width: 122px; }
.g2 { width: 194px; }
.g3 { width: 276px; }
.g4 { width: 237px; }
.g5 { width: 120px; }
.g6 { flex: 1; border-right: 0; min-width: 0; overflow: hidden; }
.g-body { display: flex; flex: 1; padding-top: 2px; min-height: 0; }
.g2 .g-body, .g3 .g-body { padding-left: 9px; }
.g4 .g-body { padding-left: 8px; }
.g-label { display: flex; align-items: center; height: 20px; margin-bottom: 2px; color: #333; }
.g1 .g-label { padding-left: 30px; }
.g2 .g-label { padding-left: 65px; }
.g3 .g-label { padding-left: 106px; }
.g4 .g-label { padding-left: 99px; }
.g5 .g-label { padding-left: 40px; }
.g6 .g-label { padding-left: 107px; }
.col { display: flex; flex-direction: column; flex: none; }
.w79 { width: 79px; }
.w65 { width: 65px; }
.w111 { width: 111px; }
.w55 { width: 55px; }
.w54 { width: 54px; }
.tool { display: flex; align-items: center; gap: 3px; height: 23px; white-space: nowrap; }
.off, .off span { color: #aeb0b3; }
.caret { width: 0; height: 0; margin-left: 8px; border-top: 4px solid #666; border-left: 3.500px solid transparent; border-right: 3.500px solid transparent; flex: none; }
.big { display: flex; flex-direction: column; align-items: center; flex: none; white-space: nowrap; }
.big span { margin-top: 2px; line-height: 18px; }
.big-ic { width: 26px; height: 26px; flex: none; margin: 4px 0 6px; }
.big-sel { width: 40px; margin: 0 5px 0 -16px; }
.sel-ic { width: 34px; height: 32px; margin: 4px 0 0; background: #e3eaf4; border: 1px solid #8ab4e3; border-top: 3px solid #4a90d9; position: relative; }
.sel-dash { position: absolute; left: 0; right: 0; top: 8px; border-top: 1px dashed #f0a020; }
.sel-tri { position: absolute; right: 1px; bottom: 1px; border-left: 9px solid #2b78c9; border-top: 6px solid transparent; border-bottom: 6px solid transparent; }
.big-pt { width: 30px; margin: 0 13px 0 11px; }
.big-line { width: 28px; margin-right: 10px; }
.big-beam { width: 36px; margin: 0 9px; }

/* combo row */
.combos { display: flex; align-items: center; gap: 6px; height: 29px; background: #c8cace; }
.combo { display: flex; align-items: center; justify-content: space-between; width: 99px; height: 21px; padding: 0 5px 0 4px; background: #fff; border: 1px solid #b9bbbf; flex: none; color: #333; }
.combo-first { margin-left: -21px; }
.show-check { display: flex; align-items: center; gap: 8px; margin-left: 1px; color: #333; }
.check-on { width: 14px; height: 14px; border-radius: 2px; background: #5a9ff0; position: relative; }
.check-on::after { content: ""; position: absolute; left: 4px; top: 1.500px; width: 5px; height: 8px; border: solid #fff; border-width: 0 2px 2px 0; transform: rotate(40deg); }
.note { margin-left: 15px; color: #333; }

/* main */
.main { display: flex; height: 717px; }
.nav { width: 103px; flex: none; border-right: 1px solid #c4c6ca; background: #fff; overflow: hidden; }
.nav-head { display: flex; justify-content: flex-end; gap: 4px; height: 30px; padding: 2px 4px 0 0; border-top: 1px solid #9a9ca0; border-bottom: 1px solid #d5d6d9; background: #f7f7f8; }
.nav-btn { display: flex; align-items: center; justify-content: center; width: 25px; height: 25px; background: #fff; border: 1px solid #7db5f0; border-radius: 4px; }
.nav-list { padding-top: 4px; }
.nav-list li { height: 21px; margin-bottom: 3.050px; display: flex; align-items: center; white-space: nowrap; color: #333; }
.cat { padding-left: 1px; }
.sub { padding-left: 3px; gap: 4px; }
.sub-on { background: #c7d9f0; }
.sub span { color: #333; }

.mid { width: 280px; flex: none; padding: 0 0 0 4px; background: #fbfbfb; border-top: 1px solid #9a9ca0; overflow: hidden; }
.panel { border: 1px solid #c2c4c8; background: #efefef; width: 276px; }
.panel-comp { height: 230px; margin-bottom: 4px; }
.panel-prop { height: 500px; }
.p-title { height: 11px; background: #d3d4d8; position: relative; }
.p-x { position: absolute; right: 3px; top: -2px; font-size: 12px; line-height: 14px; color: #777; font-weight: 700; }
.p-tabs { display: flex; height: 22px; background: #efefef; border-bottom: 1px solid #c2c4c8; }
.p-tab { width: 65px; text-align: center; line-height: 21px; background: #e2e2e2; color: #999; border-right: 1px solid #d0d0d0; }
.p-tab-on { background: #efefef; color: #333; font-weight: 700; }
.p-tools { display: flex; align-items: center; height: 29px; padding-left: 4px; border-bottom: 1px solid #c2c4c8; }
.p-tool { display: flex; align-items: center; gap: 4px; color: #333; }
.p-new { width: 68px; }
.p-new .caret { margin-left: 7px; }
.p-rem { width: 59px; }
.p-more { margin-left: auto; font-size: 8px; color: #555; width: 15px; white-space: nowrap; }
.p-search { display: flex; align-items: center; justify-content: space-between; height: 20px; padding: 0 6px 0 3px; background: #fff; border-bottom: 1px solid #c2c4c8; color: #999; }
.search-ic { width: 12px; height: 12px; }
.tree { height: 146px; background: #fff; position: relative; }
.tree-row { display: flex; align-items: center; height: 21px; color: #333; }
.lv1 { padding-left: 10px; }
.lv2 { padding-left: 30px; }
.lv3 { padding-left: 60px; }
.tri { width: 0; height: 0; margin-right: 8px; border-bottom: 6px solid #444; border-left: 6px solid transparent; }
.leaf { display: block; width: 47px; height: 21px; line-height: 21px; padding-left: 5px; font-size: 13px; }
.leaf-on { background: #c7d9f0; }
.tree-thumb { position: absolute; right: 5px; top: 13px; width: 8px; height: 41px; border-radius: 4px; background: #c8c8c8; }
.prop-body { display: flex; height: 466px; background: #fff; overflow: hidden; }
.prop { width: 232px; flex: none; table-layout: fixed; border-collapse: collapse; align-self: flex-start; }
.c-n { width: 22px; }
.c-name { width: 77px; }
.c-val { width: 94px; }
.c-add { width: 39px; }
.prop th { height: 20px; padding: 0; font-weight: 400; background: #eee; color: #444; border-right: 1px solid #d8d8d8; }
.prop th.blank { background: #fff; }
.prop th.th-on { background: #7cb8f9; color: #fff; }
.prop td { height: 21px; padding: 0 0 0 3px; border: 1px solid #c2c4c8; white-space: nowrap; overflow: hidden; color: #222; line-height: 18px; }
.prop td.link { color: #2f6fe0; }
.prop td.n { padding: 0; text-align: center; background: #eee; color: #444; font-size: 13px; }
.prop td.n-on { background: #7cb8f9; color: #fff; }
.prop td.v { padding-left: 3px; font-size: 13px; }
.prop td.v-c { font-size: 12px; }
.prop td.v-sel { border: 2px solid #808080; font-size: 12px; }
.prop td.v-gray { background: #e8e8e8; color: #999; }
.rebar { display: inline-block; font-size: 10px; line-height: 10px; vertical-align: 3px; border-bottom: 1px solid #222; margin: 0 1px; }
.cb { width: 14px; height: 14px; margin: 0 auto 0 6px; border: 1px solid #7a7a7a; border-radius: 2px; background: #fff; }
.vscroll { width: 10px; margin-left: 31px; background: #f0f0f0; flex: none; }
.v-up { width: 0; margin: 3px auto 3px; border-bottom: 4px solid #444; border-left: 4px solid transparent; border-right: 4px solid transparent; }
.v-thumb { width: 8px; height: 460px; margin-left: 1px; border-radius: 4px 4px 0 0; background: #c8c8c8; }

.splitter { width: 4px; flex: none; background: #fbfbfb; padding-top: 264px; border-top: 1px solid #9a9ca0; }
.grip { height: 99px; background: #5d6a76; padding-top: 44px; }
.grip i { border-right: 4px solid #cfd3d7; border-top: 4px solid transparent; border-bottom: 4px solid transparent; width: 0; }

/* CAD */
.work { width: 708px; flex: none; display: flex; flex-direction: column; }
.cad { display: block; flex: none; shape-rendering: crispEdges; }
.r { fill: none; stroke: #f00; stroke-width: 1; }
.thick { stroke-width: 2; }
.dash { stroke-dasharray: 35 17; }
.g { fill: none; stroke: #0b7a0b; stroke-width: 1; }
.wt text { fill: #fff; font: 17px "Liberation Sans", sans-serif; text-anchor: middle; dominant-baseline: central; }
.rt text { fill: none; stroke: #f00; stroke-width: .5; font: 17px "Liberation Sans", sans-serif; text-anchor: middle; dominant-baseline: central; }
.rt text.big-t { font-size: 24px; }
.rt .num text { font-size: 18px; }
.ax { font: 16px "Liberation Sans", sans-serif; text-anchor: middle; dominant-baseline: central; }
.ax-y { fill: #00e000; }
.ax-x { fill: #f00; }
.hbar { height: 4px; background: #fff; flex: none; padding-left: 571px; }
.hbar i { width: 100px; height: 4px; background: #5d6a76; }

/* plan table */
.plan { flex: 1; min-height: 0; background: #efefef; overflow: hidden; }
.plan-tab { height: 22px; padding-left: 8px; line-height: 21px; border-top: 1px solid #c2c4c8; border-bottom: 1px solid #c2c4c8; color: #555; font-weight: 700; }
.plan-tools { display: flex; gap: 14px; align-items: center; height: 30px; padding-left: 5px; border-bottom: 1px solid #c2c4c8; white-space: nowrap; color: #222; }
.plan-table { width: 708px; table-layout: fixed; border-collapse: collapse; }
.w61 { width: 61px; }
.w62 { width: 62px; }
.w60 { width: 60px; }
.w41 { width: 41px; }
.w101 { width: 101px; }
.w81 { width: 81px; }
.w57 { width: 57px; }
.plan-table th { height: 18px; padding: 0; font-weight: 400; line-height: 16px; color: #333; border: 1px solid #c8c9cc; white-space: nowrap; overflow: hidden; }

.pointer-arrow { position: absolute; left: 0; top: 0; pointer-events: none; }
```
